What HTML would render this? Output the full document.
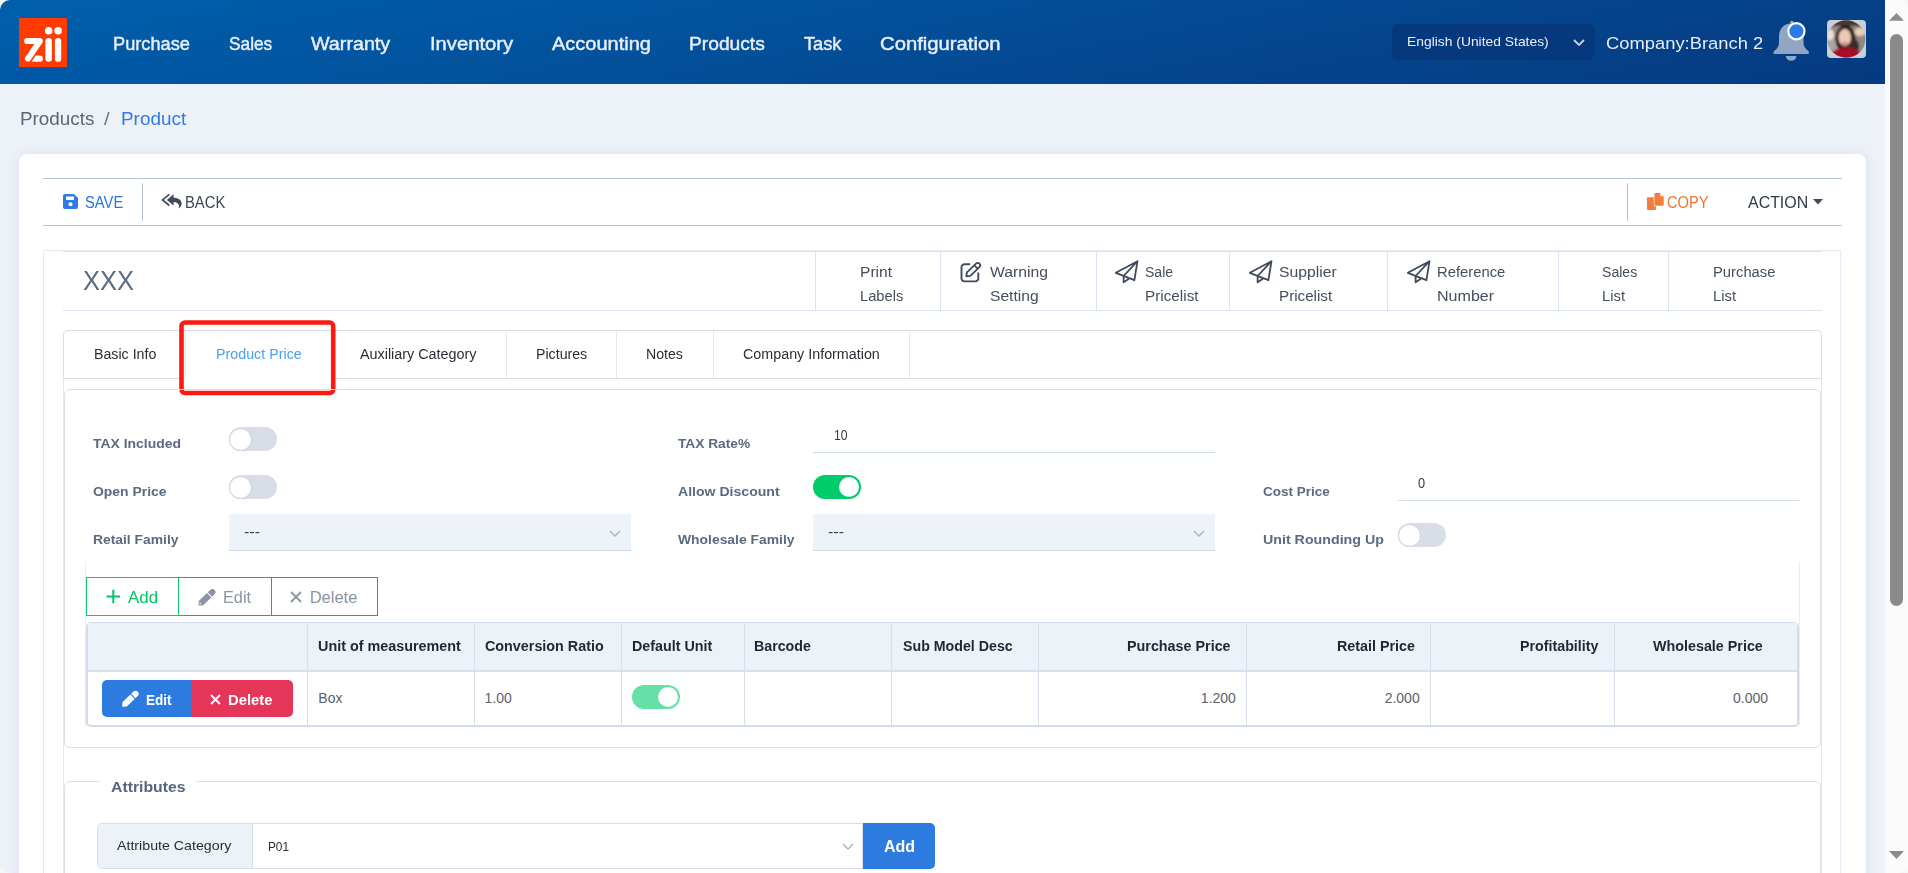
<!DOCTYPE html>
<html><head><meta charset="utf-8"><title>Product</title>
<style>
html,body{margin:0;padding:0;width:1908px;height:873px;overflow:hidden;font-family:"Liberation Sans", sans-serif;}
.a{position:absolute;}
.t{position:absolute;white-space:nowrap;}
</style></head><body>
<div class="a" style="left:0px;top:0px;width:1908px;height:873px;background:#f6f6f6"></div>
<div class="a" style="left:0px;top:0px;width:1885px;height:873px;background:#edf1f8;border-radius:10px 0 0 10px"></div>
<div class="a" style="left:0px;top:0px;width:1885px;height:84px;background:linear-gradient(169deg,rgb(0,96,173) 0%,rgb(6,57,127) 100%);border-top-left-radius:10px"></div>
<div class="a" style="left:19px;top:18px;width:48px;height:49px;background:#ff3b00"></div>
<svg class="a" style="left:19px;top:18px" width="48" height="49" viewBox="0 0 48 49"><g fill="#fff"><path d="M8.2 19.9 H20.8 A3.1 3.1 0 0 1 23.4 24.7 L11.3 42.4 A3.1 3.1 0 0 1 5.8 39.9 L15.3 26.1 H8.2 A3.1 3.1 0 0 1 8.2 19.9Z"/><path d="M16.6 37.6 H20.8 A3.1 3.1 0 0 1 20.8 43.8 H12.6 Z"/><rect x="26.4" y="19.9" width="6.5" height="23.9" rx="3.25"/><rect x="35.9" y="19.9" width="6.3" height="23.9" rx="3.15"/><circle cx="29.7" cy="12.8" r="3.8"/><circle cx="39.1" cy="12.8" r="3.8"/></g></svg>
<div class="t" style="left:112.70px;top:35.14px;font-size:18.5px;line-height:18.5px;color:#e9eef6;font-weight:400;transform:scaleX(0.9838);transform-origin:0 0;-webkit-text-stroke:0.45px #e9eef6;">Purchase</div>
<div class="t" style="left:228.80px;top:35.14px;font-size:18.5px;line-height:18.5px;color:#e9eef6;font-weight:400;transform:scaleX(0.9337);transform-origin:0 0;-webkit-text-stroke:0.45px #e9eef6;">Sales</div>
<div class="t" style="left:311.40px;top:35.14px;font-size:18.5px;line-height:18.5px;color:#e9eef6;font-weight:400;transform:scaleX(1.0652);transform-origin:0 0;-webkit-text-stroke:0.45px #e9eef6;">Warranty</div>
<div class="t" style="left:429.50px;top:35.14px;font-size:18.5px;line-height:18.5px;color:#e9eef6;font-weight:400;transform:scaleX(1.0934);transform-origin:0 0;-webkit-text-stroke:0.45px #e9eef6;">Inventory</div>
<div class="t" style="left:551.50px;top:35.14px;font-size:18.5px;line-height:18.5px;color:#e9eef6;font-weight:400;transform:scaleX(1.0815);transform-origin:0 0;-webkit-text-stroke:0.45px #e9eef6;">Accounting</div>
<div class="t" style="left:689.40px;top:35.14px;font-size:18.5px;line-height:18.5px;color:#e9eef6;font-weight:400;transform:scaleX(1.0383);transform-origin:0 0;-webkit-text-stroke:0.45px #e9eef6;">Products</div>
<div class="t" style="left:804.10px;top:35.14px;font-size:18.5px;line-height:18.5px;color:#e9eef6;font-weight:400;transform:scaleX(0.9849);transform-origin:0 0;-webkit-text-stroke:0.45px #e9eef6;">Task</div>
<div class="t" style="left:879.60px;top:35.14px;font-size:18.5px;line-height:18.5px;color:#e9eef6;font-weight:400;transform:scaleX(1.0951);transform-origin:0 0;-webkit-text-stroke:0.45px #e9eef6;">Configuration</div>
<div class="a" style="left:1392px;top:24px;width:203px;height:36px;background:#06387e;border-radius:6px"></div>
<div class="t" style="left:1406.60px;top:35.40px;font-size:13px;line-height:13px;color:#e8edf5;font-weight:400;transform:scaleX(1.0658);transform-origin:0 0;">English (United States)</div>
<svg class="a" style="left:1573px;top:39px" width="12" height="7" viewBox="0 0 12 7"><path d="M1 1 L6 6 L11 1" stroke="#c9d3e2" stroke-width="1.8" fill="none"/></svg>
<div class="t" style="left:1605.60px;top:35.12px;font-size:17.1px;line-height:17.1px;color:#e8edf5;font-weight:400;transform:scaleX(1.0746);transform-origin:0 0;">Company:Branch 2</div>
<svg class="a" style="left:1768px;top:15px" width="48" height="50" viewBox="0 0 48 50"><path d="M23.2 8.6 C15.2 8.6 11 14.5 11 22 V27.5 C11 31.5 9 33.8 6.6 35.6 Q4.6 37.2 6 38.9 H40.4 Q41.8 37.2 39.8 35.6 C37.4 33.8 35.5 31.5 35.5 27.5 V22 C35.5 14.5 31.2 8.6 23.2 8.6Z" fill="#91a6c5"/><circle cx="23.9" cy="7.6" r="1.9" fill="#91a6c5"/><path d="M17.8 41 H28.4 A5.3 4.8 0 0 1 17.8 41Z" fill="#91a6c5"/><circle cx="28.4" cy="16.3" r="8.1" fill="#2f7be6" stroke="#fff" stroke-width="2.2"/></svg>
<div class="a" style="left:1827px;top:20px;width:39px;height:38px;background:#c9cfd9;border-radius:4px"></div>
<svg class="a" style="left:1827px;top:20px" width="39" height="38" viewBox="0 0 39 38"><defs><clipPath id="avc"><ellipse cx="19.3" cy="19" rx="19.1" ry="18.7"/></clipPath><filter id="avb" x="-20%" y="-20%" width="140%" height="140%"><feGaussianBlur stdDeviation="1.0"/></filter></defs><g clip-path="url(#avc)"><g filter="url(#avb)"><rect x="-3" y="-3" width="45" height="45" fill="#8f8a87"/><rect x="-3" y="-3" width="45" height="9" fill="#4a3833"/><ellipse cx="3" cy="15" rx="4" ry="6" fill="#ece0cf"/><ellipse cx="33" cy="12" rx="6" ry="4" fill="#e8cfb8"/><rect x="-3" y="20" width="18" height="14" fill="#a9a6a5"/><ellipse cx="18.5" cy="19" rx="10" ry="14" fill="#2e1f1c"/><ellipse cx="26" cy="27" rx="6" ry="9" fill="#3a2925"/><ellipse cx="17.8" cy="17.5" rx="6.2" ry="8.5" fill="#ecc9b6"/><ellipse cx="18" cy="23.3" rx="2.9" ry="1.4" fill="#c92a3c"/><rect x="16.3" y="22.7" width="3.6" height="0.9" fill="#fff"/><ellipse cx="19" cy="42" rx="19" ry="14.5" fill="#a80f2a"/></g></g></svg>
<div class="a" style="left:1885px;top:0px;width:23px;height:873px;background:#fbfbfb;border-radius:0 10px 10px 0"></div>
<svg class="a" style="left:1888px;top:12px" width="17" height="10" viewBox="0 0 17 10"><path d="M1 8.8 L8.5 1 L16 8.8Z" fill="#8c8c8c"/></svg>
<div class="a" style="left:1890px;top:34px;width:13px;height:572px;background:#8a8a8a;border-radius:7px"></div>
<svg class="a" style="left:1888px;top:850px" width="17" height="10" viewBox="0 0 17 10"><path d="M1 1 L8.5 9 L16 1Z" fill="#8c8c8c"/></svg>
<div class="t" style="left:20.00px;top:109.69px;font-size:18.8px;line-height:18.8px;color:#5b6578;font-weight:400;transform:scaleX(1.0042);transform-origin:0 0;">Products</div>
<div class="t" style="left:104.00px;top:109.69px;font-size:18.8px;line-height:18.8px;color:#6c757d;font-weight:400;transform:scaleX(1.0715);transform-origin:0 0;">/</div>
<div class="t" style="left:120.60px;top:109.69px;font-size:18.8px;line-height:18.8px;color:#2f7be6;font-weight:400;transform:scaleX(1.0064);transform-origin:0 0;">Product</div>
<div class="a" style="left:19px;top:154px;width:1847px;height:800px;background:#fff;border-radius:8px;box-shadow:0 0 12px rgba(60,80,120,0.10)"></div>
<div class="a" style="left:43px;top:178px;width:1799px;height:1px;background:#b6c2d4"></div>
<div class="a" style="left:43px;top:225px;width:1799px;height:1px;background:#b6c2d4"></div>
<div class="a" style="left:142px;top:183px;width:1px;height:38px;background:#b6c2d4"></div>
<div class="a" style="left:1627px;top:183px;width:1px;height:38px;background:#b6c2d4"></div>
<svg class="a" style="left:63px;top:194px" width="15" height="15" viewBox="0 0 15 15"><path d="M2 0 H11 L15 4 V13 A2 2 0 0 1 13 15 H2 A2 2 0 0 1 0 13 V2 A2 2 0 0 1 2 0Z M3 2.6 V6 H11 V2.6Z" fill="#2f7be6" fill-rule="evenodd"/><circle cx="7.5" cy="10.2" r="2" fill="#fff"/></svg>
<div class="t" style="left:85.00px;top:195.13px;font-size:15.8px;line-height:15.8px;color:#2a74e0;font-weight:400;transform:scaleX(0.9345);transform-origin:0 0;">SAVE</div>
<svg class="a" style="left:158px;top:188px" width="28" height="26" viewBox="0 0 28 26"><path d="M11.3 6.3 L4.6 11.9 L11.3 17.5" stroke="#3f4a5a" stroke-width="1.7" fill="none" stroke-linejoin="miter"/><path d="M8.8 11.9 L15.6 6.2 V9.8 C20.6 9.8 23.6 12.2 23.6 15.6 C23.6 17.9 22.2 19.7 20.3 20.6 C21.1 19.3 21.3 17.9 20.6 16.6 C19.9 15.1 18.1 14.1 15.6 14.1 V17.6Z" fill="#3f4a5a"/></svg>
<div class="t" style="left:185.20px;top:195.13px;font-size:15.8px;line-height:15.8px;color:#3c4757;font-weight:400;transform:scaleX(0.9367);transform-origin:0 0;">BACK</div>
<svg class="a" style="left:1646px;top:192px" width="19" height="19" viewBox="0 0 19 19"><rect x="0.9" y="5.2" width="9.2" height="12.7" rx="1.3" fill="#f07f3c"/><path d="M8.4 2 A1 1 0 0 1 9.4 1 H14.4 L17.7 4.3 V12.8 A1 1 0 0 1 16.7 13.8 H9.4 A1 1 0 0 1 8.4 12.8Z" fill="#f07f3c" stroke="#fff" stroke-width="1.2" paint-order="stroke"/><path d="M14.4 1 V4.3 H17.7Z" fill="#fff"/></svg>
<div class="t" style="left:1666.80px;top:194.53px;font-size:15.8px;line-height:15.8px;color:#ee7430;font-weight:400;transform:scaleX(0.9268);transform-origin:0 0;">COPY</div>
<div class="t" style="left:1747.50px;top:194.53px;font-size:15.8px;line-height:15.8px;color:#2e3a4b;font-weight:400;transform:scaleX(1.0085);transform-origin:0 0;">ACTION</div>
<svg class="a" style="left:1813px;top:199px" width="10" height="6" viewBox="0 0 10 6"><path d="M0 0 H10 L5 5.5Z" fill="#3d4a5c"/></svg>
<div class="a" style="left:43px;top:250px;width:1798px;height:700px;border:1px solid #e4eaf3;border-bottom:none;box-sizing:border-box"></div>
<div class="a" style="left:63px;top:251px;width:1759px;height:1px;background:#d9e2ef"></div>
<div class="a" style="left:63px;top:310px;width:1759px;height:1px;background:#d9e2ef"></div>
<div class="t" style="left:82.90px;top:266.71px;font-size:27.4px;line-height:27.4px;color:#5c6b82;font-weight:400;transform:scaleX(0.9320);transform-origin:0 0;">XXX</div>
<div class="a" style="left:815px;top:252px;width:1px;height:58px;background:#d9e2ef"></div>
<div class="a" style="left:940px;top:252px;width:1px;height:58px;background:#d9e2ef"></div>
<div class="a" style="left:1096px;top:252px;width:1px;height:58px;background:#d9e2ef"></div>
<div class="a" style="left:1229px;top:252px;width:1px;height:58px;background:#d9e2ef"></div>
<div class="a" style="left:1387px;top:252px;width:1px;height:58px;background:#d9e2ef"></div>
<div class="a" style="left:1558px;top:252px;width:1px;height:58px;background:#d9e2ef"></div>
<div class="a" style="left:1668px;top:252px;width:1px;height:58px;background:#d9e2ef"></div>
<div class="t" style="left:860.10px;top:264.03px;font-size:15.2px;line-height:15.2px;color:#444f5f;font-weight:400;transform:scaleX(1.0272);transform-origin:0 0;">Print</div>
<div class="t" style="left:860.10px;top:287.63px;font-size:15.2px;line-height:15.2px;color:#444f5f;font-weight:400;transform:scaleX(0.9666);transform-origin:0 0;">Labels</div>
<div class="t" style="left:989.60px;top:264.03px;font-size:15.2px;line-height:15.2px;color:#444f5f;font-weight:400;transform:scaleX(1.0349);transform-origin:0 0;">Warning</div>
<div class="t" style="left:989.60px;top:287.63px;font-size:15.2px;line-height:15.2px;color:#444f5f;font-weight:400;transform:scaleX(1.0271);transform-origin:0 0;">Setting</div>
<div class="t" style="left:1145.20px;top:264.03px;font-size:15.2px;line-height:15.2px;color:#444f5f;font-weight:400;transform:scaleX(0.9239);transform-origin:0 0;">Sale</div>
<div class="t" style="left:1145.20px;top:287.63px;font-size:15.2px;line-height:15.2px;color:#444f5f;font-weight:400;transform:scaleX(1.0072);transform-origin:0 0;">Pricelist</div>
<div class="t" style="left:1278.80px;top:264.03px;font-size:15.2px;line-height:15.2px;color:#444f5f;font-weight:400;transform:scaleX(1.0364);transform-origin:0 0;">Supplier</div>
<div class="t" style="left:1278.80px;top:287.63px;font-size:15.2px;line-height:15.2px;color:#444f5f;font-weight:400;transform:scaleX(0.9997);transform-origin:0 0;">Pricelist</div>
<div class="t" style="left:1437.10px;top:264.03px;font-size:15.2px;line-height:15.2px;color:#444f5f;font-weight:400;transform:scaleX(0.9753);transform-origin:0 0;">Reference</div>
<div class="t" style="left:1437.10px;top:287.63px;font-size:15.2px;line-height:15.2px;color:#444f5f;font-weight:400;transform:scaleX(1.0580);transform-origin:0 0;">Number</div>
<div class="t" style="left:1602.30px;top:264.03px;font-size:15.2px;line-height:15.2px;color:#444f5f;font-weight:400;transform:scaleX(0.9259);transform-origin:0 0;">Sales</div>
<div class="t" style="left:1602.30px;top:287.63px;font-size:15.2px;line-height:15.2px;color:#444f5f;font-weight:400;transform:scaleX(0.9767);transform-origin:0 0;">List</div>
<div class="t" style="left:1712.80px;top:264.03px;font-size:15.2px;line-height:15.2px;color:#444f5f;font-weight:400;transform:scaleX(0.9732);transform-origin:0 0;">Purchase</div>
<div class="t" style="left:1712.80px;top:287.63px;font-size:15.2px;line-height:15.2px;color:#444f5f;font-weight:400;transform:scaleX(0.9767);transform-origin:0 0;">List</div>
<svg class="a" style="left:956px;top:256px" width="32" height="30" viewBox="0 0 32 30"><path d="M13.4 8.2 H8.5 A3 3 0 0 0 5.5 11.2 V22.4 A3 3 0 0 0 8.5 25.4 H19.3 A3 3 0 0 0 22.3 22.4 V17.2" stroke="#3f4b5c" stroke-width="1.9" fill="none" stroke-linecap="round"/><path d="M10.3 20.3 L10.9 16.3 L20.0 7.6 A2.3 2.3 0 0 1 23.4 11.1 L14.3 19.8 Z M18.3 9.3 L21.7 12.7" stroke="#3f4b5c" stroke-width="1.8" fill="none" stroke-linejoin="round"/></svg>
<svg class="a" style="left:1115px;top:260px" width="24" height="24" viewBox="0 0 24 24"><path d="M22.5 1.2 L0.8 12.8 L19.4 20.2 Z M8.6 16 L22.5 1.2 M8.6 16 V22.3 L13.9 18.7" stroke="#3f4b5c" stroke-width="1.8" fill="none" stroke-linejoin="round"/></svg>
<svg class="a" style="left:1249px;top:260px" width="24" height="24" viewBox="0 0 24 24"><path d="M22.5 1.2 L0.8 12.8 L19.4 20.2 Z M8.6 16 L22.5 1.2 M8.6 16 V22.3 L13.9 18.7" stroke="#3f4b5c" stroke-width="1.8" fill="none" stroke-linejoin="round"/></svg>
<svg class="a" style="left:1407px;top:260px" width="24" height="24" viewBox="0 0 24 24"><path d="M22.5 1.2 L0.8 12.8 L19.4 20.2 Z M8.6 16 L22.5 1.2 M8.6 16 V22.3 L13.9 18.7" stroke="#3f4b5c" stroke-width="1.8" fill="none" stroke-linejoin="round"/></svg>
<div class="a" style="left:63px;top:330px;width:1759px;height:49px;border:1px solid #dadde2;border-bottom:none;border-radius:5px 5px 0 0;box-sizing:border-box"></div>
<div class="a" style="left:63px;top:378px;width:122px;height:1px;background:#dadde2"></div>
<div class="a" style="left:331px;top:378px;width:1491px;height:1px;background:#dadde2"></div>
<div class="a" style="left:185px;top:331px;width:1px;height:47px;background:#e4e8ef"></div>
<div class="a" style="left:331px;top:331px;width:1px;height:47px;background:#e4e8ef"></div>
<div class="a" style="left:506px;top:331px;width:1px;height:47px;background:#e4e8ef"></div>
<div class="a" style="left:616px;top:331px;width:1px;height:47px;background:#e4e8ef"></div>
<div class="a" style="left:713px;top:331px;width:1px;height:47px;background:#e4e8ef"></div>
<div class="a" style="left:909px;top:331px;width:1px;height:47px;background:#e4e8ef"></div>
<div class="a" style="left:63px;top:379px;width:1px;height:494px;background:#e4e7ed"></div>
<div class="a" style="left:1821px;top:379px;width:1px;height:494px;background:#e4e7ed"></div>
<div class="t" style="left:94.00px;top:347.15px;font-size:14px;line-height:14px;color:#2a2e35;font-weight:400;transform:scaleX(1.0134);transform-origin:0 0;">Basic Info</div>
<div class="t" style="left:215.50px;top:347.15px;font-size:14px;line-height:14px;color:#4a9ff5;font-weight:400;transform:scaleX(1.0199);transform-origin:0 0;">Product Price</div>
<div class="t" style="left:359.90px;top:347.15px;font-size:14px;line-height:14px;color:#2a2e35;font-weight:400;transform:scaleX(1.0256);transform-origin:0 0;">Auxiliary Category</div>
<div class="t" style="left:535.70px;top:347.15px;font-size:14px;line-height:14px;color:#2a2e35;font-weight:400;transform:scaleX(1.0125);transform-origin:0 0;">Pictures</div>
<div class="t" style="left:646.40px;top:347.15px;font-size:14px;line-height:14px;color:#2a2e35;font-weight:400;transform:scaleX(1.0091);transform-origin:0 0;">Notes</div>
<div class="t" style="left:742.50px;top:347.15px;font-size:14px;line-height:14px;color:#2a2e35;font-weight:400;transform:scaleX(1.0221);transform-origin:0 0;">Company Information</div>
<svg class="a" style="left:170px;top:310px" width="180" height="95" viewBox="0 0 180 95"><rect x="11.5" y="12.5" width="151.7" height="70.5" rx="3.5" fill="none" stroke="#fd1a12" stroke-width="4.6"/></svg>
<div class="a" style="left:64px;top:389px;width:1757px;height:359px;border:1px solid #dedfe4;border-radius:6px;box-sizing:border-box"></div>
<div class="t" style="left:93.30px;top:436.60px;font-size:13.7px;line-height:13.7px;color:#5a6a80;font-weight:700;transform:scaleX(1.0172);transform-origin:0 0;">TAX Included</div>
<div class="a" style="left:229px;top:427px;width:48px;height:24px;background:#d9dde5;border-radius:12px"></div>
<div class="a" style="left:230px;top:428.5px;width:21px;height:21px;background:#fff;border-radius:50%;box-shadow:0 0 0 1px #d0d5dd"></div>
<div class="t" style="left:93.30px;top:484.60px;font-size:13.7px;line-height:13.7px;color:#5a6a80;font-weight:700;transform:scaleX(1.0175);transform-origin:0 0;">Open Price</div>
<div class="a" style="left:229px;top:475px;width:48px;height:24px;background:#d9dde5;border-radius:12px"></div>
<div class="a" style="left:230px;top:476.5px;width:21px;height:21px;background:#fff;border-radius:50%;box-shadow:0 0 0 1px #d0d5dd"></div>
<div class="t" style="left:93.30px;top:532.60px;font-size:13.7px;line-height:13.7px;color:#5a6a80;font-weight:700;transform:scaleX(1.0117);transform-origin:0 0;">Retail Family</div>
<div class="a" style="left:229px;top:514px;width:402px;height:37px;background:#eef2f9;border-bottom:1px solid #cfdaea;box-sizing:border-box"></div>
<div class="t" style="left:243.60px;top:525.15px;font-size:14px;line-height:14px;color:#3b4350;font-weight:400;transform:scaleX(1.1440);transform-origin:0 0;">---</div>
<svg class="a" style="left:609px;top:530px" width="12" height="7" viewBox="0 0 12 7"><path d="M1 1 L6 6 L11 1" stroke="#a9b2bf" stroke-width="1.4" fill="none"/></svg>
<div class="t" style="left:678.20px;top:436.60px;font-size:13.7px;line-height:13.7px;color:#5a6a80;font-weight:700;transform:scaleX(1.0019);transform-origin:0 0;">TAX Rate%</div>
<div class="t" style="left:833.70px;top:429.02px;font-size:13.8px;line-height:13.8px;color:#333b48;font-weight:400;transform:scaleX(0.8862);transform-origin:0 0;">10</div>
<div class="a" style="left:813px;top:452px;width:402px;height:1px;background:#cfdcec"></div>
<div class="t" style="left:678.20px;top:484.60px;font-size:13.7px;line-height:13.7px;color:#5a6a80;font-weight:700;transform:scaleX(1.0279);transform-origin:0 0;">Allow Discount</div>
<div class="a" style="left:813px;top:475px;width:48px;height:24px;background:#00cc6a;border-radius:12px"></div>
<div class="a" style="left:839px;top:477px;width:20px;height:20px;background:#fff;border-radius:50%"></div>
<div class="t" style="left:678.20px;top:532.60px;font-size:13.7px;line-height:13.7px;color:#5a6a80;font-weight:700;transform:scaleX(1.0142);transform-origin:0 0;">Wholesale Family</div>
<div class="a" style="left:813px;top:514px;width:402px;height:37px;background:#eef2f9;border-bottom:1px solid #cfdaea;box-sizing:border-box"></div>
<div class="t" style="left:827.60px;top:525.15px;font-size:14px;line-height:14px;color:#3b4350;font-weight:400;transform:scaleX(1.1440);transform-origin:0 0;">---</div>
<svg class="a" style="left:1193px;top:530px" width="12" height="7" viewBox="0 0 12 7"><path d="M1 1 L6 6 L11 1" stroke="#a9b2bf" stroke-width="1.4" fill="none"/></svg>
<div class="t" style="left:1262.90px;top:484.60px;font-size:13.7px;line-height:13.7px;color:#5a6a80;font-weight:700;transform:scaleX(0.9844);transform-origin:0 0;">Cost Price</div>
<div class="t" style="left:1417.50px;top:477.02px;font-size:13.8px;line-height:13.8px;color:#333b48;font-weight:400;transform:scaleX(0.9253);transform-origin:0 0;">0</div>
<div class="a" style="left:1398px;top:500px;width:402px;height:1px;background:#cfdcec"></div>
<div class="t" style="left:1262.90px;top:532.60px;font-size:13.7px;line-height:13.7px;color:#5a6a80;font-weight:700;transform:scaleX(1.0393);transform-origin:0 0;">Unit Rounding Up</div>
<div class="a" style="left:1398px;top:523px;width:48px;height:24px;background:#d9dde5;border-radius:12px"></div>
<div class="a" style="left:1399px;top:524.5px;width:21px;height:21px;background:#fff;border-radius:50%;box-shadow:0 0 0 1px #d0d5dd"></div>
<div class="a" style="left:85px;top:562px;width:1px;height:165px;background:#e8edf4"></div>
<div class="a" style="left:1799px;top:562px;width:1px;height:165px;background:#e8edf4"></div>
<div class="a" style="left:86px;top:577px;width:93px;height:39px;border:1px solid #10c86e;box-sizing:border-box;background:#fff"></div>
<div class="a" style="left:178px;top:577px;width:94px;height:39px;border:1px solid #6f7b8b;box-sizing:border-box"></div>
<div class="a" style="left:271px;top:577px;width:107px;height:39px;border:1px solid #6f7b8b;box-sizing:border-box"></div>
<div class="a" style="left:86px;top:577px;width:93px;height:39px;border:1px solid #10c86e;box-sizing:border-box"></div>
<svg class="a" style="left:106px;top:589px" width="15" height="15" viewBox="0 0 15 15"><path d="M7.3 0.8 V14.2 M0.5 7.5 H14" stroke="#00c56a" stroke-width="2"/></svg>
<div class="t" style="left:128.30px;top:589.13px;font-size:16.5px;line-height:16.5px;color:#00c56a;font-weight:400;transform:scaleX(1.0220);transform-origin:0 0;">Add</div>
<svg class="a" style="left:190px;top:582px" width="30" height="28" viewBox="0 0 30 28"><g transform="translate(1.1 1.1) scale(1.03)"><path d="M7.1 21.7 L7.56 17.12 L15.5 9.54 L19.64 13.88 L11.7 21.46Z M16.22 8.85 L18.6 6.58 A3 3 0 0 1 22.74 10.92 L20.36 13.19Z" fill="#8a94a3"/><path d="M8.1 20.6 L8.5 18.6 L10.1 20.2Z" fill="#fff"/></g></svg>
<div class="t" style="left:223.30px;top:589.13px;font-size:16.5px;line-height:16.5px;color:#8a94a3;font-weight:400;transform:scaleX(0.9849);transform-origin:0 0;">Edit</div>
<svg class="a" style="left:290px;top:591px" width="12" height="12" viewBox="0 0 12 12"><path d="M1 1 L11 11 M11 1 L1 11" stroke="#8a94a3" stroke-width="1.8"/></svg>
<div class="t" style="left:309.70px;top:589.13px;font-size:16.5px;line-height:16.5px;color:#8a94a3;font-weight:400;transform:scaleX(1.0000);transform-origin:0 0;">Delete</div>
<div class="a" style="left:86px;top:622px;width:1713px;height:105px;border:1px solid #d3dcea;border-width:1px 2px 2px 2px;border-radius:5px;box-sizing:border-box;overflow:hidden"></div>
<div class="a" style="left:88px;top:623px;width:1709px;height:47px;background:#edf1f8"></div>
<div class="a" style="left:88px;top:670px;width:1709px;height:2px;background:#d8e0ec"></div>
<div class="a" style="left:307px;top:623px;width:1px;height:103px;background:#d8e0ec"></div>
<div class="a" style="left:474px;top:623px;width:1px;height:103px;background:#d8e0ec"></div>
<div class="a" style="left:621px;top:623px;width:1px;height:103px;background:#d8e0ec"></div>
<div class="a" style="left:744px;top:623px;width:1px;height:103px;background:#d8e0ec"></div>
<div class="a" style="left:891px;top:623px;width:1px;height:103px;background:#d8e0ec"></div>
<div class="a" style="left:1038px;top:623px;width:1px;height:103px;background:#d8e0ec"></div>
<div class="a" style="left:1246px;top:623px;width:1px;height:103px;background:#d8e0ec"></div>
<div class="a" style="left:1430px;top:623px;width:1px;height:103px;background:#d8e0ec"></div>
<div class="a" style="left:1614px;top:623px;width:1px;height:103px;background:#d8e0ec"></div>
<div class="t" style="left:318.30px;top:639.23px;font-size:14.5px;line-height:14.5px;color:#1f2733;font-weight:700;transform:scaleX(0.9909);transform-origin:0 0;">Unit of measurement</div>
<div class="t" style="left:484.60px;top:639.23px;font-size:14.5px;line-height:14.5px;color:#1f2733;font-weight:700;transform:scaleX(0.9888);transform-origin:0 0;">Conversion Ratio</div>
<div class="t" style="left:632.40px;top:639.23px;font-size:14.5px;line-height:14.5px;color:#1f2733;font-weight:700;transform:scaleX(0.9870);transform-origin:0 0;">Default Unit</div>
<div class="t" style="left:754.30px;top:639.23px;font-size:14.5px;line-height:14.5px;color:#1f2733;font-weight:700;transform:scaleX(0.9808);transform-origin:0 0;">Barcode</div>
<div class="t" style="left:902.60px;top:639.23px;font-size:14.5px;line-height:14.5px;color:#1f2733;font-weight:700;transform:scaleX(0.9795);transform-origin:0 0;">Sub Model Desc</div>
<div class="t" style="left:1127.40px;top:639.23px;font-size:14.5px;line-height:14.5px;color:#1f2733;font-weight:700;transform:scaleX(0.9886);transform-origin:0 0;">Purchase Price</div>
<div class="t" style="left:1336.80px;top:639.23px;font-size:14.5px;line-height:14.5px;color:#1f2733;font-weight:700;transform:scaleX(0.9876);transform-origin:0 0;">Retail Price</div>
<div class="t" style="left:1520.10px;top:639.23px;font-size:14.5px;line-height:14.5px;color:#1f2733;font-weight:700;transform:scaleX(0.9829);transform-origin:0 0;">Profitability</div>
<div class="t" style="left:1653.40px;top:639.23px;font-size:14.5px;line-height:14.5px;color:#1f2733;font-weight:700;transform:scaleX(0.9873);transform-origin:0 0;">Wholesale Price</div>
<div class="t" style="left:318.30px;top:691.05px;font-size:14px;line-height:14px;color:#5a6270;font-weight:400;">Box</div>
<div class="t" style="left:484.60px;top:691.05px;font-size:14px;line-height:14px;color:#5a6270;font-weight:400;">1.00</div>
<div class="a" style="left:632px;top:685px;width:48px;height:24px;background:#66e0a6;border-radius:12px"></div>
<div class="a" style="left:658px;top:687px;width:20px;height:20px;background:#fff;border-radius:50%"></div>
<div class="t" style="left:1200.77px;top:691.05px;font-size:14px;line-height:14px;color:#5a6270;font-weight:400;">1.200</div>
<div class="t" style="left:1384.67px;top:691.05px;font-size:14px;line-height:14px;color:#5a6270;font-weight:400;">2.000</div>
<div class="t" style="left:1733.07px;top:691.05px;font-size:14px;line-height:14px;color:#5a6270;font-weight:400;">0.000</div>
<div class="a" style="left:102px;top:680px;width:89px;height:37px;background:#2e7be0;border-radius:5px 0 0 5px"></div>
<div class="a" style="left:191px;top:680px;width:102px;height:37px;background:#e5365a;border-radius:0 5px 5px 0"></div>
<svg class="a" style="left:115px;top:685px" width="30" height="27" viewBox="0 0 30 27"><path d="M7.1 21.7 L7.56 17.12 L15.5 9.54 L19.64 13.88 L11.7 21.46Z M16.22 8.85 L18.6 6.58 A3 3 0 0 1 22.74 10.92 L20.36 13.19Z" fill="#fff"/></svg>
<div class="t" style="left:145.70px;top:691.90px;font-size:15px;line-height:15px;color:#fff;font-weight:700;transform:scaleX(0.9035);transform-origin:0 0;">Edit</div>
<svg class="a" style="left:210px;top:694px" width="11" height="11" viewBox="0 0 11 11"><path d="M1 1 L10 10 M10 1 L1 10" stroke="#fff" stroke-width="2"/></svg>
<div class="t" style="left:227.80px;top:691.90px;font-size:15px;line-height:15px;color:#fff;font-weight:700;transform:scaleX(0.9863);transform-origin:0 0;">Delete</div>
<div class="a" style="left:64px;top:781px;width:1757px;height:200px;border:1px solid #dedfe4;border-radius:6px;box-sizing:border-box"></div>
<div class="a" style="left:100px;top:775px;width:96px;height:12px;background:#fff"></div>
<div class="t" style="left:111.40px;top:779.48px;font-size:15.5px;line-height:15.5px;color:#56667c;font-weight:700;transform:scaleX(1.0193);transform-origin:0 0;">Attributes</div>
<div class="a" style="left:97px;top:823px;width:766px;height:46px;border:1px solid #d5deeb;border-radius:5px 0 0 5px;box-sizing:border-box;background:#fff"></div>
<div class="a" style="left:98px;top:824px;width:155px;height:44px;background:#edf1f8;border-right:1px solid #d5deeb;border-radius:4px 0 0 4px;box-sizing:border-box"></div>
<div class="t" style="left:117.20px;top:838.74px;font-size:13.3px;line-height:13.3px;color:#2a2e35;font-weight:400;transform:scaleX(1.0681);transform-origin:0 0;">Attribute Category</div>
<div class="t" style="left:268.00px;top:840.47px;font-size:13.5px;line-height:13.5px;color:#2a2e35;font-weight:400;transform:scaleX(0.8744);transform-origin:0 0;">P01</div>
<svg class="a" style="left:842px;top:843px" width="12" height="7" viewBox="0 0 12 7"><path d="M1 1 L6 6 L11 1" stroke="#a9b2bf" stroke-width="1.4" fill="none"/></svg>
<div class="a" style="left:863px;top:823px;width:72px;height:46px;background:#2e7be0;border-radius:0 5px 5px 0"></div>
<div class="t" style="left:883.80px;top:837.61px;font-size:17px;line-height:17px;color:#fff;font-weight:700;transform:scaleX(0.9411);transform-origin:0 0;">Add</div>
</body></html>
